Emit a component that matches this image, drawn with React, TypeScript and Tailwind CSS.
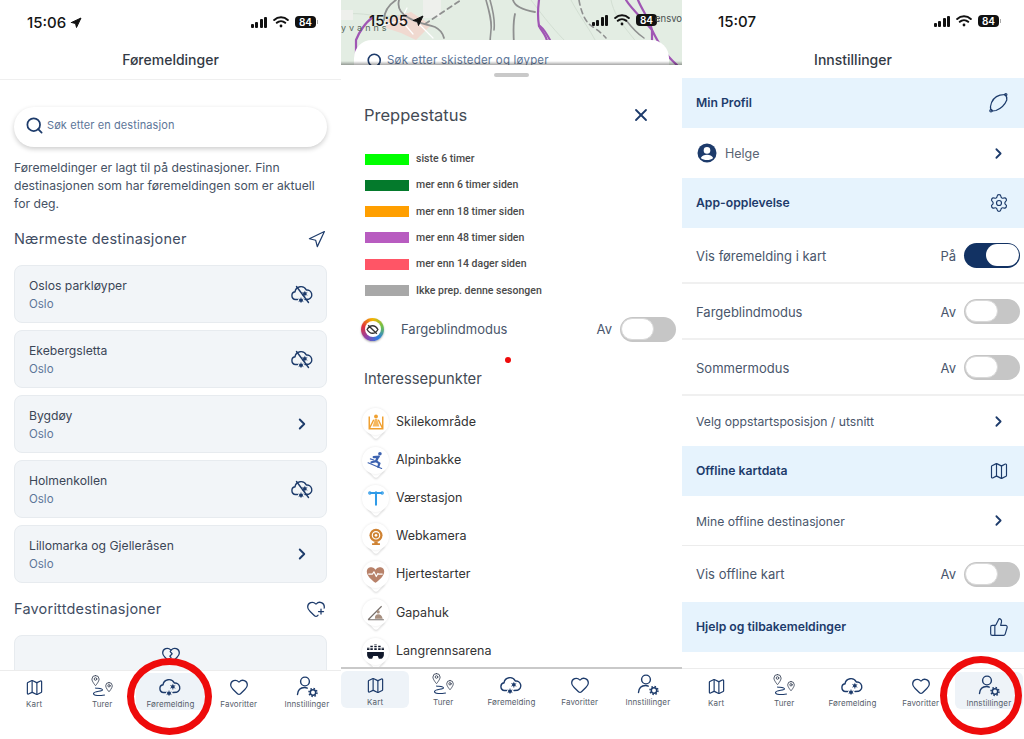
import type { ReactNode } from 'react';
import { Search, Navigation, ChevronRight, Map as MapIcon, Heart, HeartPlus, HeartCrack, Settings, ThumbsUp, X } from 'lucide-react';

const NAVY = '#1d3b6b';

function CloudSnow({ crossed = false, size = 24 }: { crossed?: boolean; size?: number }) {
  return (
    <svg width={size} height={size} viewBox="0 0 24 24" fill="none" stroke={NAVY} strokeWidth="1.4" strokeLinecap="round" strokeLinejoin="round">
      <path d="M7.500 17.500H5.500a3.900 3.900 0 0 1-.5-7.700A6 6 0 0 1 16.300 8 4.800 4.800 0 0 1 18.500 17.300L15 17.500" />
      <circle cx="14.800" cy="11.800" r="1.800" fill={NAVY} stroke="none" />
      <circle cx="11" cy="18.200" r="1.800" fill={NAVY} stroke="none" />
      <path d="M14.800 9.300v5M12.600 10.500l4.400 2.600M12.600 13.100l4.400-2.600M11 15.800v4.800M8.900 17l4.200 2.400M8.900 19.400l4.200-2.400" strokeWidth="0.7" />
      {crossed && <path d="M6.500 4.500 18.500 20.500" />}
    </svg>
  );
}

function TurerIcon() {
  return (
    <svg width="24" height="24" viewBox="0 0 24 24" fill="none" stroke="#3f4a5c" strokeWidth="0.9" strokeLinecap="round" strokeLinejoin="round">
      <path d="M5.500 0.500a3.600 3.600 0 0 1 3.600 3.600c0 2.400-3.600 6.600-3.600 6.600S1.900 6.500 1.900 4.100A3.600 3.600 0 0 1 5.500 0.500z" />
      <circle cx="5.500" cy="4" r="1.300" />
      <path d="M19 7.500a3.300 3.300 0 0 1 3.300 3.300c0 2.200-3.300 6-3.300 6s-3.300-3.800-3.300-6A3.300 3.300 0 0 1 19 7.500z" />
      <circle cx="19" cy="10.800" r="1.200" />
      <path d="M5.500 13c3 .5 7 .4 7 2s-9 1-9 3.500 6 2.300 11 1.500" stroke={NAVY} strokeWidth="1.100" />
    </svg>
  );
}

function UserGear() {
  return (
    <svg width="24" height="24" viewBox="0 0 24 24" fill="none" stroke={NAVY} strokeWidth="1.400" strokeLinecap="round">
      <circle cx="10" cy="6.500" r="4.400" />
      <path d="M2.500 19.500c.4-4.500 3.200-7 7-7 1 0 2 .2 2.800.6" />
      <circle cx="18" cy="17.500" r="2.700" strokeWidth="1.500" />
      <circle cx="18" cy="17.500" r="4" strokeWidth="1.500" strokeDasharray="1.500 1.640" strokeLinecap="butt" />
    </svg>
  );
}

function ProfileBand() {
  return (
    <svg width="22" height="22" viewBox="0 0 22 22" fill="none" stroke={NAVY} strokeWidth="1.200" strokeLinejoin="round">
      <path d="M3.500 14.500C4.500 9 8 4.500 13 3.200L18 2.500C19.500 4 20.200 6 19.800 8 18 12.500 14 16.500 9 18.500L5.500 19C4 18 3.200 16.500 3.500 14.500z" />
      <circle cx="18.800" cy="2.600" r="1.100" />
      <circle cx="4" cy="18.800" r="1.200" />
    </svg>
  );
}

function Avatar() {
  return (
    <svg width="20" height="20" viewBox="0 0 20 20">
      <circle cx="10" cy="10" r="9.500" fill={NAVY} />
      <circle cx="10" cy="7.400" r="3.300" fill="#fff" />
      <path d="M3.800 15c1.200-2.300 3.500-3.300 6.200-3.300s5 1 6.200 3.300c-3 2.700-9.400 2.700-12.400 0z" fill="#fff" />
    </svg>
  );
}

function StatusBar({ time, arrow = true, className }: { time: string; arrow?: boolean; className: string }) {
  return (
    <div className={`flex h-[44px] items-start justify-between pr-[23px] text-[#151515] ${className}`}>
      <div className="flex items-center gap-[4px] text-[15px] leading-[20px] font-medium">
        <span>{time}</span>
        {arrow && <Navigation size={12} fill="#111" stroke="#111" />}
      </div>
      <div className="flex items-center gap-[6px] pt-[3px]">
        <div className="flex items-end gap-[1.500px]">
          <span className="h-[4px] w-[3px] rounded-[1px] bg-[#111]" />
          <span className="h-[6px] w-[3px] rounded-[1px] bg-[#111]" />
          <span className="h-[9px] w-[3px] rounded-[1px] bg-[#111]" />
          <span className="h-[11px] w-[3px] rounded-[1px] bg-[#111]" />
        </div>
        <svg width="16" height="12" viewBox="0 0 16 12" fill="none" stroke="#111" strokeWidth="2" strokeLinecap="round">
          <path d="M1.200 4a10 10 0 0 1 13.600 0M3.800 6.800a6.200 6.200 0 0 1 8.400 0" />
          <circle cx="8" cy="10" r="1.400" fill="#111" stroke="none" />
        </svg>
        <div className="flex items-center gap-[1px]">
          <span className="flex h-[12px] w-[21px] items-center justify-center rounded-[4px] bg-[#111] text-[10px] leading-none font-semibold text-white">84</span>
          <span className="h-[4px] w-[1px] bg-[#aaa]" />
        </div>
      </div>
    </div>
  );
}

function Tab({ label, icon, active }: { label: string; icon: ReactNode; active?: boolean }) {
  return (
    <div className={`flex h-[37px] w-[68.200px] flex-col items-center rounded-[6px] pt-[2px] ${active ? 'bg-[#eef3f8]' : ''}`}>
      <div className="flex h-[24px] items-center justify-center">{icon}</div>
      <span className="mt-[-1px] text-[8px] leading-[12px] tracking-[0.1px] text-[#565e6b]">{label}</span>
    </div>
  );
}

function TabBar({ active, className }: { active: string; className: string }) {
  const tabs: { label: string; icon: ReactNode }[] = [
    { label: 'Kart', icon: <MapIcon size={19} stroke={NAVY} strokeWidth={1.500} /> },
    { label: 'Turer', icon: <TurerIcon /> },
    { label: 'Føremelding', icon: <CloudSnow /> },
    { label: 'Favoritter', icon: <Heart size={20} stroke={NAVY} strokeWidth={1.500} /> },
    { label: 'Innstillinger', icon: <UserGear /> },
  ];
  return (
    <div className={`flex shrink-0 items-start bg-white ${className}`}>
      {tabs.map((t) => (
        <Tab key={t.label} label={t.label} icon={t.icon} active={t.label === active} />
      ))}
    </div>
  );
}

function DestCard({ name, offline }: { name: string; offline?: boolean }) {
  return (
    <div className="flex h-[58px] items-center justify-between rounded-[8px] border border-[#e7ebef] bg-[#f2f5f8] pr-[12px] pl-[14px]">
      <div>
        <div className="text-[12.200px] leading-[18px] text-[#3b4657]">{name}</div>
        <div className="mt-[1px] text-[11.500px] leading-[16px] text-[#5d7699]">Oslo</div>
      </div>
      {offline ? <CloudSnow crossed /> : <ChevronRight size={18} stroke={NAVY} strokeWidth={2.500} className="mr-[3px]" />}
    </div>
  );
}

function Toggle({ on }: { on?: boolean }) {
  return (
    <div className={`flex h-[25px] w-[56px] items-center rounded-full p-[1px] ${on ? 'justify-end bg-[#123263]' : 'justify-start bg-[#c6c6c6]'}`}>
      <div className={`h-[22px] w-[33px] rounded-full bg-white ${on ? '' : 'border border-[#d8d8d8]'}`} />
    </div>
  );
}

function ForecastPanel() {
  return (
    <div className="flex h-[739px] w-[341px] shrink-0 flex-col overflow-hidden bg-white">
      <StatusBar time="15:06" className="pt-[13px] pl-[27px]" />
      <div className="flex h-[36px] shrink-0 items-center justify-center border-b border-[#efefef] pb-[5px] text-[14px] font-medium text-[#333a44]">Føremeldinger</div>
      <div className="min-h-0 flex-1 overflow-hidden px-[14px]">
        <div className="mt-[27px] flex h-[40px] items-center gap-[3px] rounded-[20px] bg-white pl-[11px] shadow-[0_2px_5px_rgba(0,0,0,0.2)]">
          <Search size={19} stroke={NAVY} strokeWidth={2.200} className="mb-[4px] shrink-0" />
          <span className="pb-[3px] text-[11px] tracking-[0.1px] text-[#5d7699]">Søk etter en destinasjon</span>
        </div>
        <p className="mt-[12px] text-[12.200px] leading-[18px] text-[#465264]">Føremeldinger er lagt til på destinasjoner. Finn destinasjonen som har føremeldingen som er aktuell for deg.</p>
        <div className="mt-[13px] flex h-[26px] items-center justify-between pr-[1px]">
          <span className="text-[14.500px] tracking-[0.2px] text-[#3f4d63]">Nærmeste destinasjoner</span>
          <Navigation size={19} stroke={NAVY} strokeWidth={1.500} />
        </div>
        <div className="mt-[13px] flex flex-col gap-[7px]">
          <DestCard name="Oslos parkløyper" offline />
          <DestCard name="Ekebergsletta" offline />
          <DestCard name="Bygdøy" />
          <DestCard name="Holmenkollen" offline />
          <DestCard name="Lillomarka og Gjelleråsen" />
        </div>
        <div className="mt-[13px] flex h-[26px] items-center justify-between pr-[1px]">
          <span className="text-[14.500px] tracking-[0.2px] text-[#3f4d63]">Favorittdestinasjoner</span>
          <HeartPlus size={20} stroke={NAVY} strokeWidth={1.500} />
        </div>
        <div className="mt-[13px] flex h-[80px] justify-center rounded-[8px] border border-[#e7ebef] bg-[#f2f5f8] pt-[9px]">
          <HeartCrack size={20} stroke={NAVY} strokeWidth={1.500} />
        </div>
      </div>
      <TabBar active="Føremelding" className="h-[69px] border-t border-[#ececec] pt-[2px]" />
    </div>
  );
}

function MapBackdrop() {
  return (
    <svg width="341" height="65" viewBox="0 0 341 65" fill="none" className="block" strokeLinecap="round" strokeLinejoin="round">
      <rect width="341" height="65" fill="#e3ede3" />
      <path d="M190 0c15 20 30 40 60 65M230 0c10 20 25 35 35 65M270 0c5 25 25 35 40 65M0 15c20-5 40 5 60 0" stroke="#d3dfd3" strokeWidth="1" />
      <path d="M45 28 60 33 75 40 90 25 70 12 45 20z" fill="#f0d9d0" />
      <path d="M0 10h12v10H0zM82 0h18v18H82z" fill="#eef0ec" />
      <path d="M40 26 60 20 72 34M60 20 66 8M78 24 92 38" stroke="#ffffff" strokeWidth="1.200" />
      <path d="M43 20c0-10 6-16 12-20M58 0c-2 8 2 14 10 18 10 6 18 6 26 9 6 3 8 7 9 11" stroke="#8f9090" strokeWidth="1.800" />
      <path d="M84 24 120 0" stroke="#8f9090" strokeWidth="1.800" strokeDasharray="5 4" />
      <path d="M145 0c4 14 6 22 5 30-1 8-1 12-1 18M149 0c4 14 5 22 4 30" stroke="#8f9090" strokeWidth="1.600" />
      <path d="M172 0c2 7 10 10 22 12M174 14c-2 8-2 14-1 30" stroke="#8f9090" strokeWidth="1.800" />
      <path d="M198 0c-1 8-2 14 0 26M199 26c5 4 8 10 11 16" stroke="#a056b4" strokeWidth="2.200" />
      <path d="M198 26c3 6 8 10 8 16" stroke="#a056b4" strokeWidth="2.200" />
      <path d="M238 0c2 12 6 20 10 24 5 4 12 8 17 14" stroke="#8f9090" strokeWidth="1.600" strokeDasharray="5 4" />
      <path d="M15 62V40C18 32 25 22 31 18" stroke="#a056b4" strokeWidth="2.200" />
      <path d="M285 0c6 10 20 22 26 30M297 0c4 10 12 20 14 30 5 10 12 24 25 35" stroke="#a056b4" strokeWidth="2.200" />
      <path d="M285 20c6 8 12 14 18 18" stroke="#8f9090" strokeWidth="1.500" />
      <path d="M311 30v10" stroke="#a056b4" strokeWidth="2.200" />
    </svg>
  );
}

const legend = [
  { label: 'siste 6 timer', swatch: 'bg-[#00ff00]' },
  { label: 'mer enn 6 timer siden', swatch: 'bg-[#047a2c]' },
  { label: 'mer enn 18 timer siden', swatch: 'bg-[#ff9f00]' },
  { label: 'mer enn 48 timer siden', swatch: 'bg-[#b85cc0]' },
  { label: 'mer enn 14 dager siden', swatch: 'bg-[#ff5566]' },
  { label: 'Ikke prep. denne sesongen', swatch: 'bg-[#a8a8a8]' },
];

function Pin({ children }: { children: ReactNode }) {
  return (
    <div className="relative flex h-[27px] w-[27px] shrink-0 items-center justify-center">
      <div className="absolute top-[15px] left-[6.500px] h-[14px] w-[14px] rotate-45 rounded-[3px] bg-white shadow-[1px_1px_2px_rgba(0,0,0,0.12)]" />
      <div className="absolute inset-0 rounded-full bg-white shadow-[0_0_3px_rgba(0,0,0,0.1)]" />
      <div className="relative flex">{children}</div>
    </div>
  );
}

const pois: { label: string; icon: ReactNode }[] = [
  {
    label: 'Skilekområde',
    icon: (
      <svg width="18" height="18" viewBox="0 0 16 16" fill="none" stroke="#f0a030" strokeWidth="1.300">
        <path d="M2 3v11h12V3M2 14l4-8M14 14l-4-8" />
        <circle cx="8" cy="3" r="1.700" fill="#f0a030" stroke="none" />
        <path d="M7 5 5 12h6L9 5z" fill="#f5b860" stroke="none" />
      </svg>
    ),
  },
  {
    label: 'Alpinbakke',
    icon: (
      <svg width="18" height="18" viewBox="0 0 16 16" fill="#3c62b0" stroke="#3c62b0" strokeWidth="1" strokeLinecap="round">
        <circle cx="11.500" cy="2.500" r="1.600" stroke="none" />
        <path d="M10.500 5 6 5.500M10 5 8 9l3 2-1 3M8 9l-4 1" strokeWidth="2" fill="none" />
        <path d="M1 10.500 13 15.500M3 7l3 1" fill="none" />
      </svg>
    ),
  },
  {
    label: 'Værstasjon',
    icon: (
      <svg width="18" height="18" viewBox="0 0 16 16" fill="none" stroke="#2f9be8" strokeWidth="1.800" strokeLinecap="round">
        <path d="M8 3v11M3 3.500h10" />
        <circle cx="2.500" cy="3.500" r="1" strokeWidth="1" />
        <circle cx="13.500" cy="3.500" r="1" strokeWidth="1" />
      </svg>
    ),
  },
  {
    label: 'Webkamera',
    icon: (
      <svg width="18" height="18" viewBox="0 0 16 16" fill="none">
        <circle cx="8" cy="6.500" r="5.800" fill="#cf8232" />
        <circle cx="8" cy="6.500" r="3.300" fill="none" stroke="#fff" strokeWidth="1" />
        <circle cx="8" cy="6.500" r="1.200" fill="#fff" />
        <path d="M6.500 12h3v1.500h2V15h-7v-1.500h2z" fill="#cf8232" />
      </svg>
    ),
  },
  {
    label: 'Hjertestarter',
    icon: (
      <svg width="19" height="18" viewBox="0 0 24 22" fill="none">
        <path d="M12 21S1 14 1 7a5.800 5.800 0 0 1 11-2.600A5.800 5.800 0 0 1 23 7c0 7-11 14-11 14z" fill="#b8826a" />
        <path d="M3 10h5l2-3 3 6 2-4 1 1h5" stroke="#fff" strokeWidth="1.500" strokeLinejoin="round" />
      </svg>
    ),
  },
  {
    label: 'Gapahuk',
    icon: (
      <svg width="18" height="18" viewBox="0 0 16 16" fill="none" stroke="#77706c" strokeWidth="1">
        <path d="M1 14 13 2M1 14h14" />
        <circle cx="10" cy="7" r="1.400" fill="#a89080" stroke="none" />
        <path d="M7 13c0-3 1-4 3-4s3 1 4 4z" fill="#a89080" stroke="none" />
      </svg>
    ),
  },
  {
    label: 'Langrennsarena',
    icon: (
      <svg width="19" height="18" viewBox="0 0 17 16" fill="#10182b">
        <path d="M1 9h15v2.500c0 1-1 3.500-3 3.500h-1.500l-1-2.500h-4l-1 2.500H4c-2 0-3-2.500-3-3.500z" />
        <path d="M2 7V4.500M5 7V2.500M8.500 7V2M12 7V2.500M15 7V4.500" stroke="#10182b" strokeWidth="2.200" strokeDasharray="1.500 .8" />
      </svg>
    ),
  },
];

function LegendPanel() {
  return (
    <div className="relative flex h-[739px] w-[341px] shrink-0 flex-col overflow-hidden bg-white">
      <div className="relative h-[65px] shrink-0 overflow-hidden">
        <MapBackdrop />
        <div className="absolute top-0 right-0 left-0">
          <StatusBar time="15:05" className="pt-[11px] pl-[28px]" />
        </div>
        <span className="absolute top-[12px] right-0 text-[9.500px] text-[#4a5050]">ensvo</span>
        <span className="absolute top-[21px] left-0 text-[9px] tracking-[3px] text-[#5a6a60]">yvanns</span>
        <div className="absolute top-[40px] right-[13px] left-[13px] flex h-[50px] items-start gap-[3px] rounded-t-[18px] bg-white pt-[12px] pl-[12px]">
          <Search size={18} stroke={NAVY} strokeWidth={2.200} className="shrink-0" />
          <span className="text-[11.500px] tracking-[0.2px] text-[#5d7699]">Søk etter skisteder og løyper</span>
        </div>
        <div className="absolute right-0 bottom-0 left-0 h-[4px] bg-gradient-to-t from-black/35 to-transparent" />
      </div>
      <div className="flex min-h-0 flex-1 flex-col overflow-hidden">
        <div className="mx-auto mt-[8px] h-[4px] w-[35px] shrink-0 rounded-full bg-[#c9c9c9]" />
        <div className="mt-[25px] flex h-[26px] shrink-0 items-center justify-between pr-[31px] pl-[23px]">
          <span className="text-[16.500px] text-[#444b55]">Preppestatus</span>
          <X size={20} stroke={NAVY} strokeWidth={2.200} />
        </div>
        <div className="mt-[21px] flex shrink-0 flex-col gap-[6.300px] pl-[24px]">
          {legend.map((l) => (
            <div key={l.label} className="flex h-[20px] items-center gap-[7px]">
              <span className={`h-[11px] w-[44px] ${l.swatch}`} />
              <span className="font-['Roboto',sans-serif] text-[10.500px] font-medium text-[#4a4a4a]">{l.label}</span>
            </div>
          ))}
        </div>
        <div className="mt-[16px] flex h-[26px] shrink-0 items-center pr-[6px] pl-[20px]">
          <div className="flex h-[23px] w-[23px] items-center justify-center rounded-full bg-[conic-gradient(#f5b400,#6cc04a,#2a7de1,#8e44ad,#e0303a,#f5b400)] shadow-[0_1px_2px_rgba(0,0,0,0.3)]">
            <div className="flex h-[16px] w-[16px] items-center justify-center rounded-full bg-white">
              <svg width="13" height="13" viewBox="0 0 24 24" fill="none" stroke="#333" strokeWidth="2.500">
                <path d="M2 12s4-7 10-7 10 7 10 7-4 7-10 7-10-7-10-7zM4 4l16 16" />
              </svg>
            </div>
          </div>
          <span className="ml-[17px] text-[13px] text-[#49566b]">Fargeblindmodus</span>
          <span className="mr-[8px] ml-auto text-[13px] text-[#49566b]">Av</span>
          <Toggle />
        </div>
        <div className="relative h-[24px] shrink-0">
          <span className="absolute top-[15px] left-[164px] h-[6px] w-[6px] rounded-full bg-[#ee0b0b]" />
        </div>
        <div className="h-[26px] shrink-0 pl-[23px] text-[14.800px] leading-[26px] text-[#444b55]">Interessepunkter</div>
        <div className="mt-[16px] flex flex-col gap-[11.200px] pl-[21px]">
          {pois.map((p) => (
            <div key={p.label} className="flex h-[27px] items-center gap-[7px]">
              <Pin>{p.icon}</Pin>
              <span className="text-[12.500px] text-[#333]">{p.label}</span>
            </div>
          ))}
        </div>
      </div>
      <TabBar active="Kart" className="h-[72px] border-t-2 border-[#c9c9c9] pt-[2px]" />
    </div>
  );
}

function SectionRow({ title, icon }: { title: string; icon: ReactNode }) {
  return (
    <div className="flex h-[50px] shrink-0 items-center justify-between bg-[#e6f3fd] pr-[15px] pl-[14px]">
      <span className="text-[12.200px] font-semibold text-[#1d3b6b]">{title}</span>
      {icon}
    </div>
  );
}

function ToggleRow({ label, on, border = true }: { label: string; on?: boolean; border?: boolean }) {
  return (
    <div className={`flex h-[56px] shrink-0 items-center pr-[4px] pl-[14px] ${border ? 'border-b-2 border-[#f0f0f0]' : ''}`}>
      <span className={`text-[13px] text-[#49566b] ${border ? 'pt-[3px]' : 'pt-[1px]'}`}>{label}</span>
      <span className={`mr-[8px] ml-auto text-[13px] text-[#49566b] ${border ? 'pt-[3px]' : 'pt-[1px]'}`}>{on ? 'På' : 'Av'}</span>
      <Toggle on={on} />
    </div>
  );
}

function LinkRow({ label, border = false }: { label: string; border?: boolean }) {
  return (
    <div className={`flex h-[50px] shrink-0 items-center justify-between pr-[17px] pl-[14px] ${border ? 'border-b border-[#ececec]' : ''}`}>
      <span className={`text-[12.200px] text-[#49566b] ${border ? 'pt-[3px]' : 'pt-[2px]'}`}>{label}</span>
      <ChevronRight size={17} stroke={NAVY} strokeWidth={2.500} />
    </div>
  );
}

function SettingsPanel() {
  return (
    <div className="flex h-[739px] w-[342px] shrink-0 flex-col overflow-hidden bg-white">
      <StatusBar time="15:07" arrow={false} className="pt-[12px] pl-[36px]" />
      <div className="flex h-[34px] shrink-0 items-center justify-center pb-[4px] text-[14px] font-medium text-[#333a44]">Innstillinger</div>
      <div className="flex min-h-0 flex-1 flex-col overflow-hidden">
        <SectionRow title="Min Profil" icon={<ProfileBand />} />
        <div className="flex h-[50px] shrink-0 items-center justify-between pr-[17px] pl-[15px]">
          <div className="flex items-center gap-[8px]">
            <Avatar />
            <span className="pt-[2px] text-[12.500px] text-[#5a6574]">Helge</span>
          </div>
          <ChevronRight size={17} stroke={NAVY} strokeWidth={2.500} />
        </div>
        <SectionRow title="App-opplevelse" icon={<Settings size={20} stroke={NAVY} strokeWidth={1.400} />} />
        <ToggleRow label="Vis føremelding i kart" on />
        <ToggleRow label="Fargeblindmodus" />
        <ToggleRow label="Sommermodus" />
        <LinkRow label="Velg oppstartsposisjon / utsnitt" />
        <SectionRow title="Offline kartdata" icon={<MapIcon size={20} stroke={NAVY} strokeWidth={1.400} />} />
        <LinkRow label="Mine offline destinasjoner" border />
        <ToggleRow label="Vis offline kart" border={false} />
        <SectionRow title="Hjelp og tilbakemeldinger" icon={<ThumbsUp size={20} stroke={NAVY} strokeWidth={1.400} />} />
      </div>
      <TabBar active="Innstillinger" className="h-[71px] border-t border-[#ececec] pt-[3px]" />
    </div>
  );
}

export default function App() {
  return (
    <div className="relative flex h-[739px] w-[1024px] overflow-hidden bg-white font-['Inter',sans-serif]">
      <ForecastPanel />
      <LegendPanel />
      <SettingsPanel />
      {/* red marks drawn over the screenshots */}
      <div className="absolute top-[658px] left-[127px] h-[77px] w-[85px] rounded-[50%] border-[7px] border-[#ee0b0b]" />
      <div className="absolute top-[656px] left-[940px] h-[79px] w-[82px] rounded-[50%] border-[7px] border-[#ee0b0b]" />
    </div>
  );
}
